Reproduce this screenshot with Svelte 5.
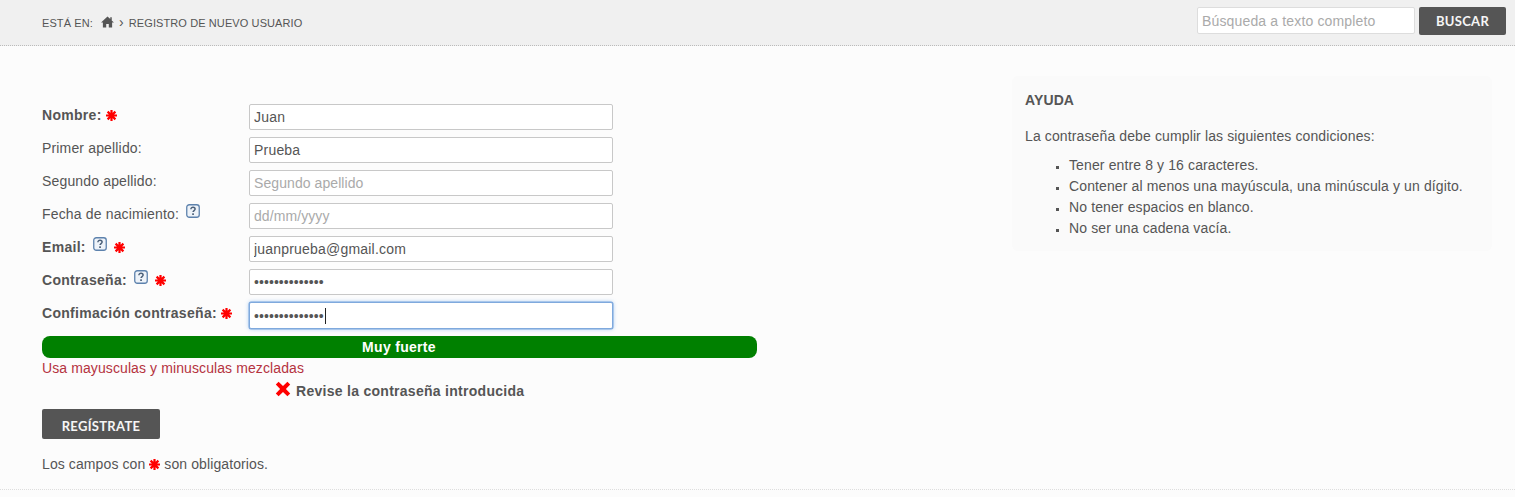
<script>
	const fields = [
		{ id: 'nombre', label: 'Nombre:', required: true, value: 'Juan', placeholder: 'Nombre' },
		{ id: 'apellido1', label: 'Primer apellido:', value: 'Prueba', placeholder: 'Primer apellido' },
		{ id: 'apellido2', label: 'Segundo apellido:', value: '', placeholder: 'Segundo apellido' },
		{ id: 'fecha', label: 'Fecha de nacimiento:', help: true, value: '', placeholder: 'dd/mm/yyyy' },
		{ id: 'email', label: 'Email:', required: true, help: true, value: 'juanprueba@gmail.com', placeholder: 'Email' },
		{ id: 'pass', label: 'Contraseña:', required: true, help: true, value: 'Prueba12345678', type: 'password' },
		{ id: 'pass2', label: 'Confimación contraseña:', required: true, value: 'Prueba12345678', type: 'password', focused: true }
	];
	const rules = [
		'Tener entre 8 y 16 caracteres.',
		'Contener al menos una mayúscula, una minúscula y un dígito.',
		'No tener espacios en blanco.',
		'No ser una cadena vacía.'
	];
</script>

{#snippet star()}
	<svg class="star" viewBox="0 0 11 11" width="11" height="11" aria-hidden="true">
		<path d="M5.5 0v11M0 5.5h11M1.6 1.6l7.8 7.8M9.4 1.6 1.6 9.4" stroke="#f00" stroke-width="2.2" />
	</svg>
{/snippet}

{#snippet helpIcon()}
	<svg class="help" viewBox="0 0 14 14" width="14" height="14" aria-hidden="true">
		<rect x=".75" y=".75" width="12.5" height="12.5" rx="2.5" fill="#eef3f9" stroke="#5d82ad" stroke-width="1.3" />
		<path d="M4.9 5.2c0-1.3 1-1.9 2.1-1.9s2.1.6 2.1 1.8c0 1.4-2 1.5-2 2.9" fill="none" stroke="#4a5f78" stroke-width="1.5" />
		<rect x="6.2" y="9.3" width="1.7" height="1.7" fill="#4a5f78" />
	</svg>
{/snippet}

<header class="topbar">
	<nav class="crumbs">
		<span class="here">Está en:</span>
		<svg class="home" viewBox="0 0 14 13" width="13" height="12" aria-hidden="true">
			<path d="M7 .5 0 7h2v5.5h3.6V8.6h2.8v3.9H12V7h2l-2.4-2.2V1.3H10v2z" fill="#555" />
		</svg>
		<span class="sep">›</span>
		<span>Registro de nuevo usuario</span>
	</nav>
	<form class="search" onsubmit={(e) => e.preventDefault()}>
		<input type="text" placeholder="Búsqueda a texto completo" />
		<button class="btn">BUSCAR</button>
	</form>
</header>

<main class="page">
	<section class="col-form">
		<div class="rows">
			{#each fields as f}
				<div class="row">
					<label for={f.id} class:strong={f.required}>
						{f.label}
						{#if f.help}{@render helpIcon()}{/if}
						{#if f.required}{@render star()}{/if}
					</label>
					<div class="control">
						<input
							id={f.id}
							type={f.type ?? 'text'}
							class:focused={f.focused}
							value={f.value}
							placeholder={f.placeholder}
						/>
						{#if f.focused}<span class="caret"></span>{/if}
					</div>
				</div>
			{/each}
		</div>
		<div class="meter">Muy fuerte</div>
		<p class="hint">Usa mayusculas y minusculas mezcladas</p>
		<p class="error">
			<svg viewBox="0 0 16 16" width="16" height="16" aria-hidden="true">
				<path d="M.8 3.6 3.6.8 8 5.1 12.4.8l2.8 2.8L10.9 8l4.3 4.4-2.8 2.8L8 10.9l-4.4 4.3-2.8-2.8L5.1 8z" fill="#f00" />
			</svg>
			Revise la contraseña introducida
		</p>
		<button class="btn register">REGÍSTRATE</button>
		<p class="note">Los campos con {@render star()} son obligatorios.</p>
	</section>

	<aside class="aid">
		<h2>AYUDA</h2>
		<p>La contraseña debe cumplir las siguientes condiciones:</p>
		<ul>
			{#each rules as r}
				<li>{r}</li>
			{/each}
		</ul>
	</aside>
</main>

<footer class="foot"></footer>

<style>
	:global(body) {
		background: #fcfcfc;
		color: #555;
		font-family: "Liberation Sans", Arial, sans-serif;
		font-size: 14px;
		line-height: 20px;
		letter-spacing: 0.12px;
	}
	.topbar {
		display: flex;
		justify-content: space-between;
		align-items: center;
		height: 46px;
		box-sizing: border-box;
		padding: 0 9px 3px 42px;
		background: #f0f0f0;
		border-bottom: 1px dotted #bbb;
	}
	.crumbs {
		display: flex;
		align-items: center;
		font-size: 11px;
		letter-spacing: 0.1px;
		text-transform: uppercase;
		padding-top: 4px;
	}
	.here {
		width: 59px;
	}
	.home {
		margin-top: -3px;
	}
	.sep {
		margin: -2px 5px 0 5px;
		font-size: 14px;
	}
	.search {
		display: flex;
		gap: 4px;
		margin: 0;
	}
	.search input {
		width: 218px;
		height: 27px;
		box-sizing: border-box;
		padding: 0 4px;
		border: 1px solid #ddd;
		border-radius: 2px;
		background: #fff;
		font: 14px "Liberation Sans", Arial, sans-serif;
		letter-spacing: 0.15px;
	}
	input::placeholder {
		color: #aaa;
		opacity: 1;
	}
	.btn {
		border: 0;
		border-radius: 2px;
		background: #555;
		color: #f5f5f5;
		font: 700 13px Lato, "Liberation Sans", sans-serif;
		letter-spacing: 0.3px;
		width: 87px;
		height: 28px;
		padding: 0;
	}
	.page {
		display: flex;
		justify-content: space-between;
		height: 443px;
		box-sizing: border-box;
		padding: 30px 23px 0 42px;
	}
	.col-form {
		width: 715px;
		padding-top: 28px;
	}
	.rows {
		display: flex;
		flex-direction: column;
		gap: 7px;
	}
	.row {
		display: flex;
		height: 26px;
	}
	label {
		width: 207px;
		flex: none;
		line-height: 22px;
		letter-spacing: 0.16px;
		white-space: nowrap;
	}
	label.strong {
		font-weight: 700;
		letter-spacing: 0.3px;
	}
	.help {
		margin-left: 3px;
		margin-right: 3px;
		vertical-align: 1px;
	}
	.star {
		vertical-align: -1px;
	}
	.control {
		position: relative;
		width: 364px;
	}
	.control input {
		width: 100%;
		height: 26px;
		box-sizing: border-box;
		padding: 0 4px;
		border: 1px solid #c8c8c8;
		border-radius: 2px;
		background: #fff;
		color: #555;
		font: 14px "Liberation Sans", Arial, sans-serif;
		letter-spacing: 0.2px;
		outline: none;
	}
	.control input::placeholder {
		letter-spacing: 0.08px;
	}
	.control input[type="password"] {
		letter-spacing: 0.07px;
	}
	.control input.focused {
		height: 27px;
		border-color: #7fa9dd;
		box-shadow: 0 0 0 0.5px #7fa9dd, 0 0 4px rgba(82, 152, 236, 0.55);
	}
	.caret {
		position: absolute;
		left: 76px;
		top: 6px;
		width: 1px;
		height: 16px;
		background: #222;
	}
	.meter {
		margin-top: 8px;
		height: 22px;
		border-radius: 8px;
		background: #008000;
		color: #fff;
		font-weight: 700;
		letter-spacing: 0.3px;
		text-align: center;
		line-height: 22px;
		padding-right: 1px;
	}
	.hint {
		margin: 0;
		color: #b5333f;
		letter-spacing: 0.1px;
		line-height: 20px;
	}
	.error {
		display: flex;
		align-items: center;
		gap: 5px;
		margin: 3px 0 0 233px;
		font-weight: 700;
		letter-spacing: 0.28px;
		height: 20px;
	}
	.error svg {
		margin-top: -5px;
	}
	.register {
		display: block;
		width: 118px;
		height: 30px;
		margin-top: 8px;
		padding-top: 3px;
	}
	.note {
		margin: 15px 0 0;
		letter-spacing: 0.1px;
	}
	.aid {
		width: 480px;
		height: 175px;
		box-sizing: border-box;
		padding: 14px 13px;
		border-radius: 6px;
		background: #fafafa;
	}
	.aid h2 {
		margin: 0;
		font-size: 14px;
		line-height: 20px;
	}
	.aid p {
		margin: 16px 0 9px;
		line-height: 20px;
	}
	.aid ul {
		margin: 0;
		padding-left: 44px;
		line-height: 21px;
		list-style: square;
	}
	.aid li::marker {
		font-size: 11px;
	}
	.foot {
		height: 8px;
		box-sizing: border-box;
		border-top: 1px dotted #ddd;
	}
</style>
